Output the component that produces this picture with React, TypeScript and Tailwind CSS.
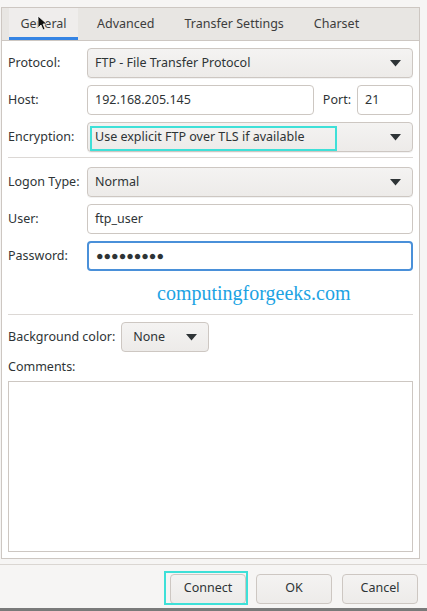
import React from 'react';

const font = { fontFamily: '"Noto Sans", "Open Sans", sans-serif' };

const Arrow: React.FC = () => (
    <svg width="11" height="7" viewBox="0 0 11 7" className="shrink-0">
        <path d="M0 0 L11 0 L5.5 6.5 Z" fill="#2e3436" />
    </svg>
);

const Combo: React.FC<{ value: string; highlight?: boolean }> = ({ value, highlight }) => (
    <div className="relative flex-1 h-[30px] flex items-center justify-between pl-[7px] pr-[11px] rounded-[4px] border border-[#cdc7c2] bg-gradient-to-b from-[#f4f3f2] to-[#edebe9] shadow-[0_1px_0_rgba(0,0,0,0.05)]">
        <span>{value}</span>
        <Arrow />
        {highlight && (
            <div className="absolute left-[2px] top-[3px] w-[247px] h-[25px] border-2 border-[#3ee0d8] pointer-events-none" />
        )}
    </div>
);

const Field: React.FC<{ value: string; className?: string; focus?: boolean }> = ({ value, className = 'flex-1', focus }) => (
    <div
        className={`${className} h-[30px] flex items-center px-[7px] rounded-[4px] bg-white ${
            focus ? 'border-2 border-[#4a90d9] px-[6px]' : 'border border-[#cdc7c2]'
        }`}
    >
        {value}
    </div>
);

const Row: React.FC<{ label: string; children: React.ReactNode }> = ({ label, children }) => (
    <div className="flex items-center">
        <div className="w-[79px] shrink-0">{label}</div>
        {children}
    </div>
);

const Btn: React.FC<{ label: string; highlight?: boolean }> = ({ label, highlight }) => (
    <div className="relative">
        <div className="w-[76px] h-[30px] flex items-center justify-center rounded-[4px] border border-[#cdc7c2] bg-gradient-to-b from-[#f4f3f2] to-[#edebe9] text-[#2e3436]">
            {label}
        </div>
        {highlight && (
            <div className="absolute left-[-6px] top-[-3px] w-[84px] h-[34px] border-2 border-[#3ee0d8] pointer-events-none" />
        )}
    </div>
);

const App: React.FC = () => {
    return (
        <div className="relative w-[427px] h-[611px] bg-[#f6f5f4] flex flex-col text-[12.5px] text-[#2e3436] overflow-hidden" style={font}>
            {/* notebook */}
            <div className="mt-[7px] ml-[1px] w-[419px] h-[552px] border border-[#cdc7c2] bg-white flex flex-col">
                <div className="h-[33px] bg-[#e8e6e3] border-b border-[#cdc7c2] flex items-stretch pl-[7px] text-[#3d3d3d]">
                    <div className="relative w-[69px] bg-[#efedec] flex items-center justify-center">
                        General
                        <div className="absolute left-0 right-0 bottom-0 h-[3px] bg-[#3584e4]" />
                    </div>
                    <div className="w-[19px]" />
                    <div className="flex items-center">Advanced</div>
                    <div className="w-[30px]" />
                    <div className="flex items-center">Transfer Settings</div>
                    <div className="w-[30px]" />
                    <div className="flex items-center">Charset</div>
                </div>

                <div className="flex-1 flex flex-col px-[6px] pt-[7px] pb-[6px]">
                    <div className="flex flex-col gap-[7px]">
                        <Row label="Protocol:">
                            <Combo value="FTP - File Transfer Protocol" />
                        </Row>
                        <Row label="Host:">
                            <Field value="192.168.205.145" className="w-[227px]" />
                            <div className="w-[43px] text-right pr-[6px]">Port:</div>
                            <Field value="21" className="flex-1" />
                        </Row>
                        <Row label="Encryption:">
                            <Combo value="Use explicit FTP over TLS if available" highlight />
                        </Row>
                    </div>

                    <div className="h-px bg-[#dcd8d5] mt-[5px] mb-[9px]" />

                    <div className="flex flex-col gap-[7px]">
                        <Row label="Logon Type:">
                            <Combo value="Normal" />
                        </Row>
                        <Row label="User:">
                            <Field value="ftp_user" />
                        </Row>
                        <Row label="Password:">
                            <Field value="●●●●●●●●●" focus />
                        </Row>
                    </div>

                    <div className="h-[43px] flex items-center pl-[149px]">
                        <span className="text-[20px] text-[#1ca3e3]" style={{ fontFamily: '"Liberation Serif", "DejaVu Serif", serif' }}>
                            computingforgeeks.com
                        </span>
                    </div>

                    <div className="h-px bg-[#dcd8d5] mb-[7px]" />

                    <div className="flex items-center">
                        <span className="mr-[6px]">Background color:</span>
                        <div className="w-[88px] h-[30px] flex items-center justify-between pl-[11px] pr-[11px] rounded-[4px] border border-[#cdc7c2] bg-gradient-to-b from-[#f4f3f2] to-[#edebe9]">
                            <span>None</span>
                            <Arrow />
                        </div>
                    </div>

                    <div className="mt-[6px] mb-[4px]">Comments:</div>
                    <div className="flex-1 border border-[#cdc7c2] bg-white" />
                </div>
            </div>

            <div className="mt-[5px] h-px bg-[#dad6d2]" />

            {/* footer */}
            <div className="flex-1 flex items-center justify-end gap-[10px] pr-[9px] pt-[4px]">
                <Btn label="Connect" highlight />
                <Btn label="OK" />
                <Btn label="Cancel" />
            </div>
            <div className="h-[3px] bg-[#7a7a7a]" />

            {/* mouse cursor */}
            <svg className="absolute left-[37px] top-[15px]" width="10" height="16" viewBox="0 0 10 16">
                <path d="M1 1 L1 13 L4 10 L6 15 L8 14 L6 9 L10 9 Z" fill="#111" stroke="#fff" strokeWidth="0.8" />
            </svg>
        </div>
    );
};

export default App;
